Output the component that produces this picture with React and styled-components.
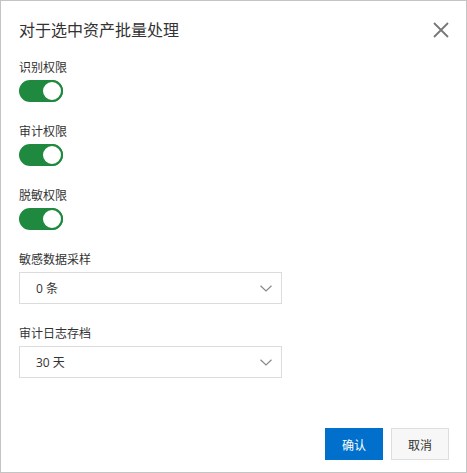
import React, { useState } from "react";
import styled, { createGlobalStyle } from "styled-components";

const Global = createGlobalStyle`
  html, body { margin: 0; padding: 0; background: #fff; }
  body { font-family: "Noto Sans CJK SC", "Noto Sans", sans-serif; }
  * { box-sizing: border-box; }
`;

const Dialog = styled.div`
  width: 467px;
  height: 473px;
  border: 1px solid #c4c4c4;
  background: #fff;
  display: flex;
  flex-direction: column;
  color: #333;
`;

const Header = styled.div`
  display: flex;
  align-items: center;
  justify-content: space-between;
  padding: 16px 17px 0 18px;
`;

const Title = styled.div`
  font-size: 16px;
  line-height: 24px;
  color: #333;
`;

const CloseButton = styled.button`
  border: 0;
  background: none;
  padding: 0;
  width: 16px;
  height: 16px;
  margin-top: 1px;
  display: flex;
  cursor: pointer;
`;

const Body = styled.div`
  display: flex;
  flex-direction: column;
  gap: 20px;
  padding: 17px 18px 0 18px;
`;

const Field = styled.div`
  display: flex;
  flex-direction: column;
  gap: 4px;
`;

const Label = styled.div`
  font-size: 12px;
  line-height: 18px;
  color: #333;
`;

const Track = styled.button`
  width: 44px;
  height: 22px;
  border-radius: 11px;
  border: 0;
  padding: 0;
  background: ${(p) => (p.$on ? "#1f8a3f" : "#ccc")};
  position: relative;
  cursor: pointer;
`;

const Knob = styled.span`
  position: absolute;
  top: 0;
  left: ${(p) => (p.$on ? "22px" : "0")};
  width: 22px;
  height: 22px;
  border-radius: 50%;
  background: #fff;
  border: 2px solid ${(p) => (p.$on ? "#1f8a3f" : "#ccc")};
`;

const SelectBox = styled.div`
  width: 263px;
  height: 32px;
  border: 1px solid #dcdcdc;
  display: flex;
  align-items: center;
  justify-content: space-between;
  padding: 0 9px 0 16px;
  font-size: 12px;
  color: #333;
  font-family: "Open Sans", "Noto Sans CJK SC", sans-serif;
`;

const Footer = styled.div`
  margin-top: auto;
  display: flex;
  justify-content: flex-end;
  gap: 8px;
  padding: 0 17px 12px 0;
`;

const Button = styled.button`
  height: 32px;
  padding: 0 16px;
  font-size: 12px;
  font-family: "Noto Sans CJK SC", sans-serif;
  border: 1px solid ${(p) => (p.$primary ? "#0070cc" : "#dedede")};
  background: ${(p) => (p.$primary ? "#0070cc" : "#f7f7f7")};
  color: ${(p) => (p.$primary ? "#fff" : "#333")};
  cursor: pointer;
`;

function Switch({ defaultOn = true }) {
  const [on, setOn] = useState(defaultOn);
  return (
    <Track $on={on} onClick={() => setOn(!on)}>
      <Knob $on={on} />
    </Track>
  );
}

function Select({ value }) {
  return (
    <SelectBox>
      <span>{value}</span>
      <svg width="12" height="7" viewBox="0 0 12 7">
        <path d="M0.5 0.8 L6 6 L11.5 0.8" fill="none" stroke="#888" strokeWidth="1.2" />
      </svg>
    </SelectBox>
  );
}

export default function App() {
  return (
    <>
      <Global />
      <Dialog>
        <Header>
          <Title>对于选中资产批量处理</Title>
          <CloseButton aria-label="close">
            <svg width="16" height="16" viewBox="0 0 16 16">
              <path d="M1 1 L15 15 M15 1 L1 15" stroke="#777" strokeWidth="1.8" />
            </svg>
          </CloseButton>
        </Header>
        <Body>
          <Field>
            <Label>识别权限</Label>
            <Switch />
          </Field>
          <Field>
            <Label>审计权限</Label>
            <Switch />
          </Field>
          <Field>
            <Label>脱敏权限</Label>
            <Switch />
          </Field>
          <Field>
            <Label>敏感数据采样</Label>
            <Select value="0 条" />
          </Field>
          <Field>
            <Label>审计日志存档</Label>
            <Select value="30 天" />
          </Field>
        </Body>
        <Footer>
          <Button $primary>确认</Button>
          <Button>取消</Button>
        </Footer>
      </Dialog>
    </>
  );
}
